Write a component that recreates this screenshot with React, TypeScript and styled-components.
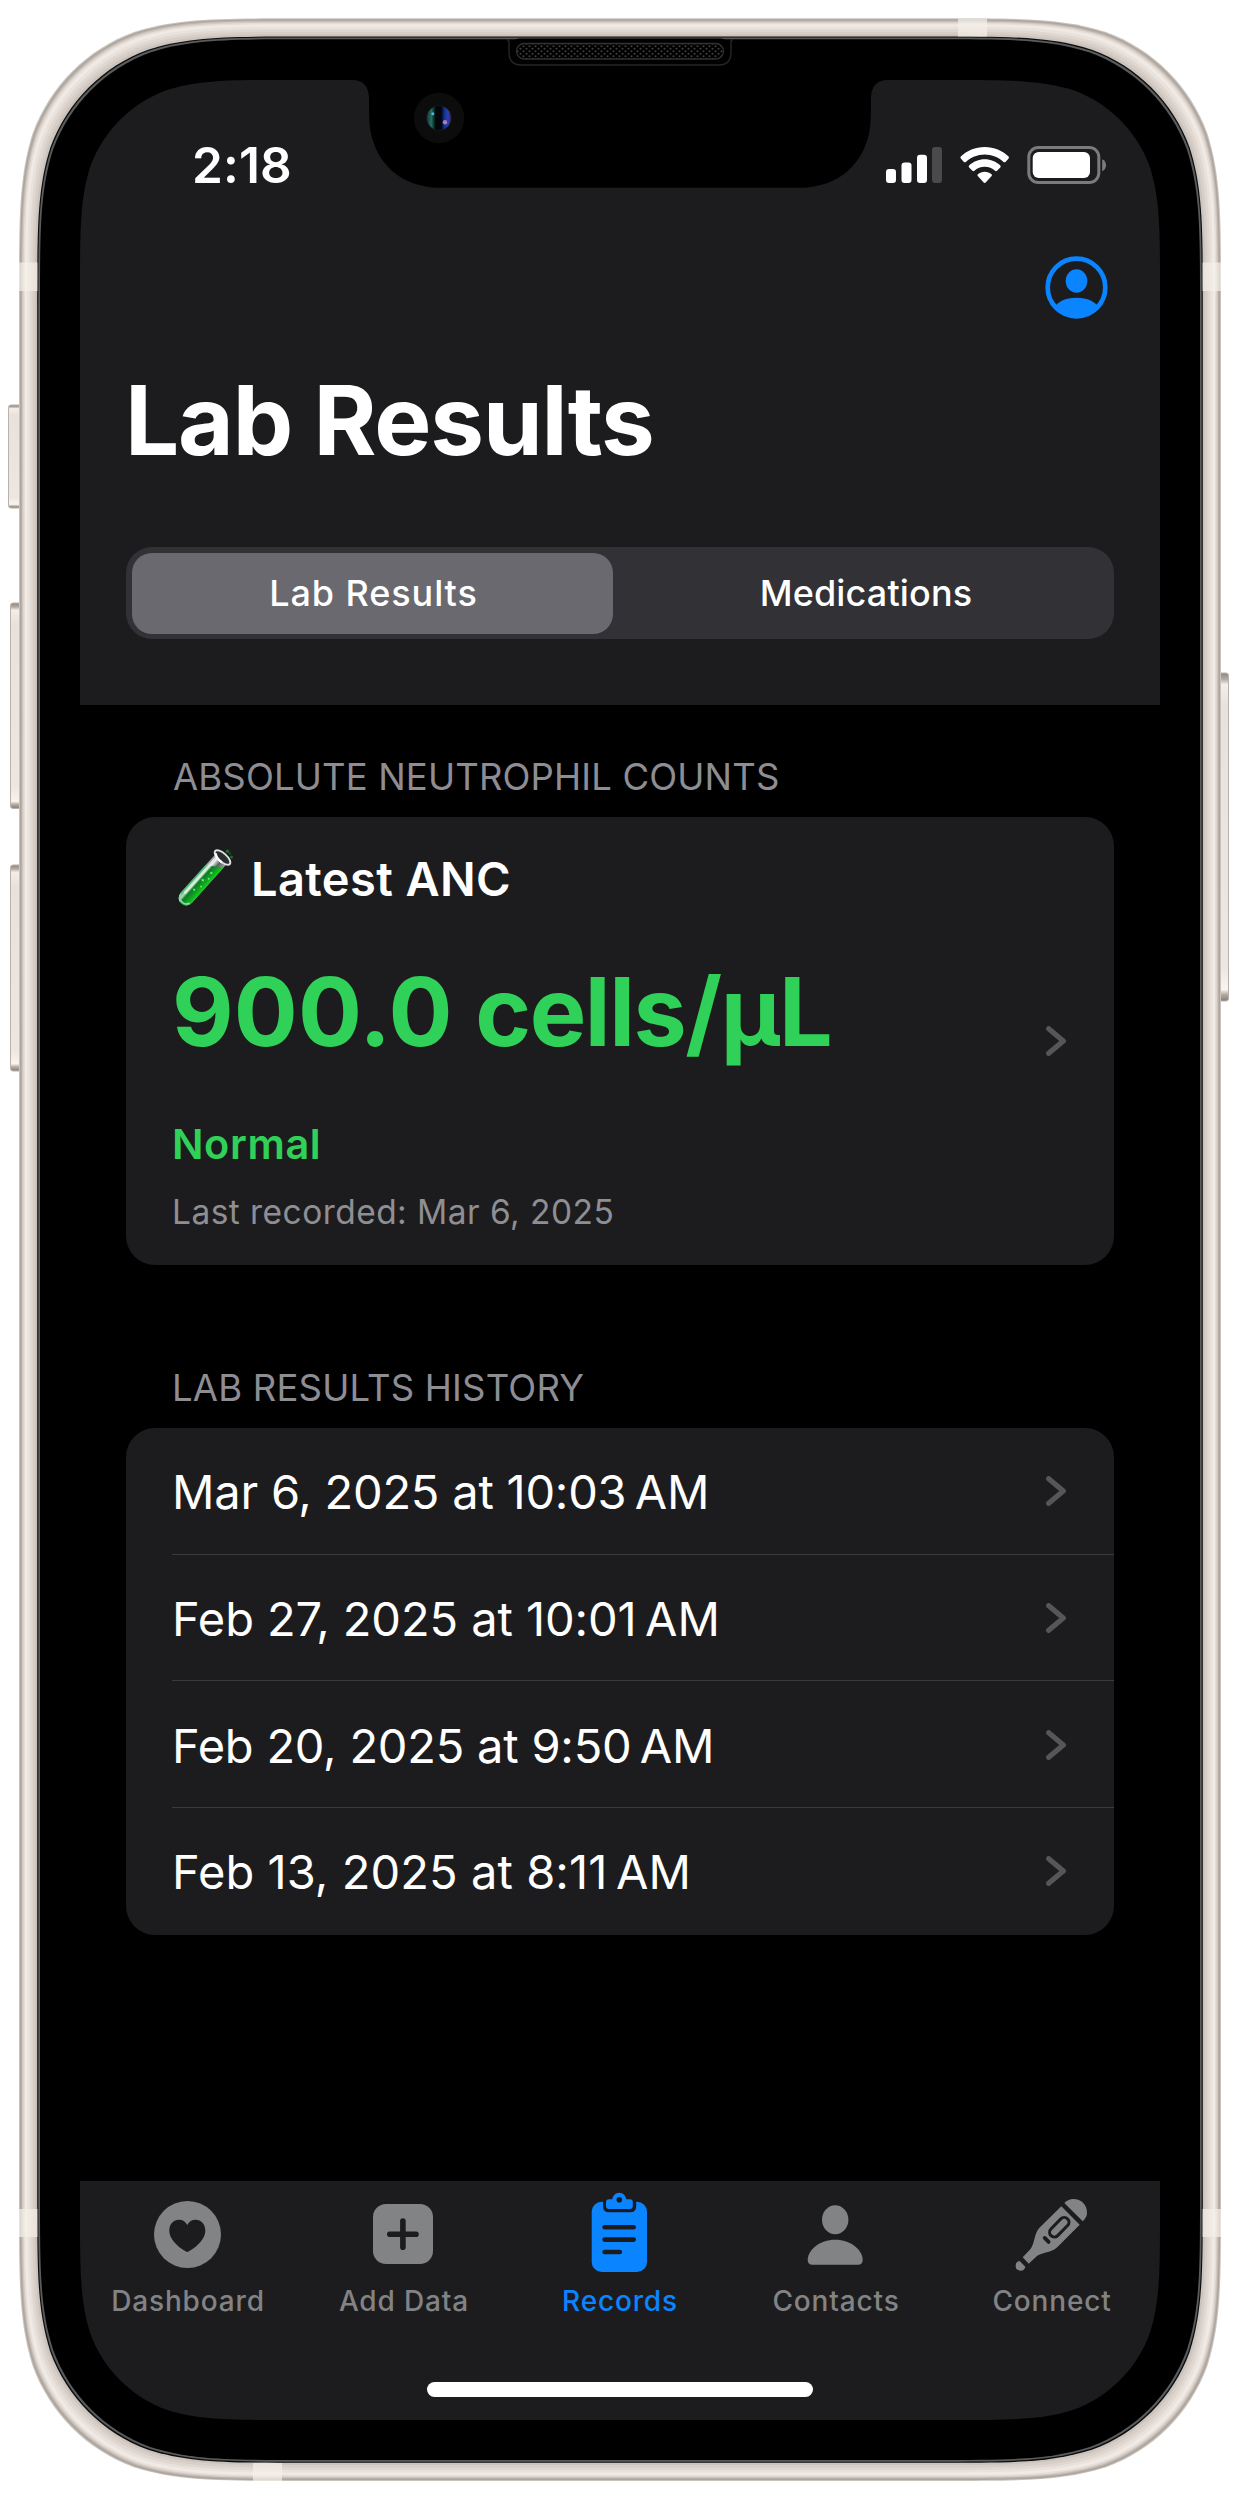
import React from "react";
import styled, { createGlobalStyle } from "styled-components";

const color = {
  surface: "#1c1c1e",
  track: "#323136",
  thumb: "#6a696f",
  blue: "#0a84ff",
  green: "#30d158",
  label: "#8d8d93",
  muted: "#8e8e93",
  tab: "#828385",
  chevron: "#565659",
  separator: "#3a3a3d",
};

/* Rounded rectangle with continuous ("squircle") corners. */
function smoothRect(x: number, y: number, w: number, h: number, r: number): string {
  const [a, b, c, d, e, f, g] = [1.52866, 1.08849, 0.86841, 0.6315, 0.07491, 0.37282, 0.16906].map((k) => k * r);
  const X = x + w;
  const Y = y + h;
  return [
    `M${x} ${y + a}`,
    `C${x} ${y + b} ${x} ${y + c} ${x + e} ${y + d}`,
    `C${x + g} ${y + f} ${x + f} ${y + g} ${x + d} ${y + e}`,
    `C${x + c} ${y} ${x + b} ${y} ${x + a} ${y}`,
    `L${X - a} ${y}`,
    `C${X - b} ${y} ${X - c} ${y} ${X - d} ${y + e}`,
    `C${X - f} ${y + g} ${X - g} ${y + f} ${X - e} ${y + d}`,
    `C${X} ${y + c} ${X} ${y + b} ${X} ${y + a}`,
    `L${X} ${Y - a}`,
    `C${X} ${Y - b} ${X} ${Y - c} ${X - e} ${Y - d}`,
    `C${X - g} ${Y - f} ${X - f} ${Y - g} ${X - d} ${Y - e}`,
    `C${X - c} ${Y} ${X - b} ${Y} ${X - a} ${Y}`,
    `L${x + a} ${Y}`,
    `C${x + b} ${Y} ${x + c} ${Y} ${x + d} ${Y - e}`,
    `C${x + f} ${Y - g} ${x + g} ${Y - f} ${x + e} ${Y - d}`,
    `C${x} ${Y - c} ${x} ${Y - b} ${x} ${Y - a}`,
    "Z",
  ].join(" ");
}

const GlobalStyle = createGlobalStyle`
  body {
    margin: 0;
    background: #fff;
  }
  * {
    box-sizing: border-box;
  }
`;

const Page = styled.div`
  position: relative;
  width: 1240px;
  height: 2500px;
  padding: 80px;
  overflow: hidden;
  font-family: Inter, "Liberation Sans", sans-serif;
  color: #fff;
`;

const FrameLayer = styled.svg`
  position: absolute;
  inset: 0;
`;

const Screen = styled.div`
  position: relative;
  width: 1080px;
  height: 2340px;
  display: flex;
  flex-direction: column;
  background: #000;
  clip-path: path("${smoothRect(0, 0, 1080, 2340, 137)}");
`;

const TopArea = styled.header`
  flex: none;
  height: 625px;
  background: ${color.surface};
  display: flex;
  flex-direction: column;
`;

const StatusBar = styled.div`
  height: 170px;
  padding: 0 53px 0 112px;
  display: flex;
  align-items: center;
  justify-content: space-between;
`;

const Clock = styled.span`
  font-size: 49.5px;
  font-weight: 600;
  line-height: 60px;
  letter-spacing: 0.15px;
`;

const NavBar = styled.div`
  height: 74px;
  padding-right: 52px;
  display: flex;
  align-items: center;
  justify-content: flex-end;
`;

const PageTitle = styled.h1`
  margin: 40px 0 0 45px;
  font-size: 96px;
  font-weight: 700;
  line-height: 112px;
  letter-spacing: -1.17px;
`;

const Segmented = styled.div`
  margin: 71px 46px 0;
  height: 92px;
  padding: 5.5px;
  border-radius: 26px;
  background: ${color.track};
  display: flex;
`;

const Segment = styled.button<{ $active?: boolean; $spacing: number }>`
  flex: ${(p) => (p.$active ? "0 0 481px" : "1")};
  border: 0;
  padding: 0 0 0 ${(p) => (p.$active ? 3 : 11)}px;
  border-radius: 20px;
  background: ${(p) => (p.$active ? color.thumb : "transparent")};
  color: #fff;
  font: 500 36px/44px Inter, "Liberation Sans", sans-serif;
  letter-spacing: ${(p) => p.$spacing}px;
`;

const Content = styled.main`
  flex: 1;
  padding: 0 46px;
`;

const Section = styled.section`
  & + & {
    margin-top: 51px;
  }
`;

const SectionTitle = styled.h2<{ $offset: number; $spacing: number }>`
  margin: 0;
  padding: 50px 0 18px ${(p) => p.$offset}px;
  font-size: 36.5px;
  font-weight: 400;
  line-height: 44px;
  letter-spacing: ${(p) => p.$spacing}px;
  color: ${color.label};
`;

const Card = styled.div`
  border-radius: 29px;
  background: ${color.surface};
  overflow: hidden;
`;

const LatestCard = styled(Card)`
  height: 448px;
  padding: 0 48px 0 46px;
  display: flex;
  align-items: center;
  justify-content: space-between;
`;

const LatestBody = styled.div`
  display: flex;
  flex-direction: column;
  padding-bottom: 2px;
`;

const LatestTitle = styled.h3`
  margin: 0;
  height: 60px;
  display: flex;
  align-items: center;
  gap: 13px;
  font-size: 47px;
  font-weight: 600;
  letter-spacing: 0.38px;
`;

const LatestValue = styled.div`
  margin-top: 48px;
  font-size: 95px;
  font-weight: 700;
  line-height: 110px;
  letter-spacing: 0.1px;
  color: ${color.green};
`;

const Unit = styled.span`
  letter-spacing: -1.4px;
`;

const LatestStatus = styled.div`
  margin-top: 52px;
  font-size: 41.5px;
  font-weight: 600;
  line-height: 50px;
  letter-spacing: 0.6px;
  color: ${color.green};
`;

const LatestDate = styled.div`
  margin-top: 23px;
  font-size: 33.5px;
  line-height: 40px;
  letter-spacing: 0.45px;
  color: ${color.muted};
`;

const HistoryRow = styled.div<{ $spacing: number }>`
  height: 126.7px;
  margin-left: 46px;
  padding-right: 48px;
  display: flex;
  align-items: center;
  justify-content: space-between;
  font-size: 47px;
  line-height: 58px;
  letter-spacing: ${(p) => p.$spacing}px;

  &:not(:last-child) {
    box-shadow: inset 0 -1px 0 ${color.separator};
  }
`;

const HistoryDate = styled.span`
  padding-top: 2px;
`;

const TabBar = styled.nav`
  flex: none;
  height: 239px;
  background: ${color.surface};
  display: flex;
  flex-direction: column;
  align-items: center;
  justify-content: space-between;
  padding: 11px 0 23px;
`;

const Tabs = styled.div`
  width: 100%;
  display: grid;
  grid-template-columns: repeat(5, 1fr);
`;

const Tab = styled.div<{ $active?: boolean }>`
  display: flex;
  flex-direction: column;
  align-items: center;
  gap: 7.5px;
  color: ${(p) => (p.$active ? color.blue : color.tab)};
`;

const TabLabel = styled.span`
  font-size: 28px;
  font-weight: 500;
  line-height: 34px;
  letter-spacing: 0.85px;
`;

const HomeIndicator = styled.div`
  width: 386px;
  height: 15px;
  border-radius: 8px;
  background: #fff;
`;

const StatusIcons = () => (
  <svg width="222" height="40" viewBox="885 145 222 40">
    <g fill="#fff">
      <rect x="886" y="169" width="10" height="14" rx="3" />
      <rect x="901.5" y="162.5" width="10" height="20.5" rx="3" />
      <rect x="917" y="154.7" width="10" height="28.3" rx="3" />
      <rect x="932" y="147" width="10" height="36" rx="3" fill="#4a4a4c" />
      <path d="M984.7 147C994 147 1002.500 150.700 1008.600 156.600Q1009.400 157.500 1008.600 158.500L1005.500 161.900Q1004.500 162.800 1003.500 161.900C998.500 157.300 992 154.500 984.700 154.500S970.900 157.300 965.900 161.900Q964.900 162.800 963.900 161.900L960.800 158.500Q960 157.500 960.800 156.600C966.900 150.700 975.400 147 984.700 147Z" />
      <path d="M984.7 159.300C990.700 159.300 996.200 161.700 1000.300 165.500Q1001.200 166.400 1000.300 167.400L997 170.700Q996 171.600 995 170.700C992.300 168.300 988.700 166.700 984.700 166.700S977.100 168.300 974.400 170.700Q973.400 171.600 972.400 170.700L969.100 167.400Q968.200 166.400 969.100 165.500C973.200 161.700 978.700 159.300 984.700 159.300Z" />
      <path d="M984.7 171.700C987.300 171.700 989.700 172.700 991.600 174.300Q992.400 175.200 991.600 176.100L985.700 182.500Q984.700 183.400 983.700 182.500L977.800 176.100Q977 175.200 977.800 174.300C979.700 172.700 982.100 171.700 984.700 171.700Z" />
      <rect x="1032.700" y="152" width="57.300" height="26" rx="6" />
    </g>
    <rect x="1028.800" y="147.500" width="70" height="35" rx="9.500" fill="none" stroke="#7b7b7d" strokeWidth="3" />
    <path d="M1102.200 159.300C1107.300 161.500 1107.300 169 1102.200 171.200Z" fill="#7b7b7d" />
  </svg>
);

const ProfileIcon = () => (
  <svg width="63" height="63" viewBox="0 0 63 63">
    <defs>
      <clipPath id="profile">
        <circle cx="31.500" cy="31.500" r="30" />
      </clipPath>
    </defs>
    <g fill={color.blue}>
      <ellipse cx="31.500" cy="25" rx="10.800" ry="11.800" />
      <path clipPath="url(#profile)" d="M8 53C12.500 45.500 20.500 41.700 31.500 41.700S50.500 45.500 55 53V63H8Z" />
    </g>
    <circle cx="31.500" cy="31.500" r="28.800" fill="none" stroke={color.blue} strokeWidth="4.700" />
  </svg>
);

const Chevron = () => (
  <svg width="20" height="30" viewBox="0 0 20 30">
    <path d="M2.700 2.700L17.300 15L2.700 27.300" fill="none" stroke={color.chevron} strokeWidth="5.200" strokeLinecap="round" strokeLinejoin="round" />
  </svg>
);

const TestTube = () => (
  <svg width="66" height="66" viewBox="2 1 66 66">
    <defs>
      <linearGradient id="glass" x1="0" x2="1">
        <stop offset="0" stopColor="#8d9391" />
        <stop offset="0.300" stopColor="#e6e9e8" />
        <stop offset="0.600" stopColor="#57605c" />
        <stop offset="1" stopColor="#9aa09e" />
      </linearGradient>
      <linearGradient id="liquid" x1="0" x2="1">
        <stop offset="0" stopColor="#3fae6a" />
        <stop offset="0.250" stopColor="#a6e5b4" />
        <stop offset="0.420" stopColor="#0f7a26" />
        <stop offset="0.750" stopColor="#11a421" />
        <stop offset="1" stopColor="#12d01c" />
      </linearGradient>
    </defs>
    <g transform="translate(52.500 12.500) rotate(42)">
      <path d="M-7.500 0H7.500V54A7.500 8 0 0 1 -7.500 54Z" fill="url(#glass)" />
      <path d="M-7.500 17L7.500 7V54A7.500 8 0 0 1 -7.500 54Z" fill="url(#liquid)" />
      <path d="M-4.300 4V51" stroke="#f0f3f1" strokeOpacity="0.700" strokeWidth="2.800" strokeLinecap="round" />
      <path d="M-6.400 55A6.500 6.700 0 0 0 6 56" fill="none" stroke="#8fd6a8" strokeWidth="1.700" />
      <ellipse cx="0" cy="0" rx="9.800" ry="4.200" fill="#2b2d2e" stroke="#dfe2e1" strokeWidth="1.900" />
      <path d="M-8 1.500Q-3 5 3 4" fill="none" stroke="#fff" strokeWidth="2.200" />
      <g fill="#5ff06a">
        <circle cx="2" cy="19" r="1.200" />
        <circle cx="4" cy="25" r="1" />
        <circle cx="0.500" cy="30" r="1.300" />
        <circle cx="3.500" cy="36" r="1" />
        <circle cx="0.500" cy="43" r="1.100" />
      </g>
    </g>
    <circle cx="57.500" cy="6.300" r="1.700" fill="#1e6a33" />
    <circle cx="61.500" cy="12" r="1.500" fill="#1e6a33" />
    <circle cx="60" cy="8.500" r="0.900" fill="#1e6a33" />
  </svg>
);

const TabGlyph = styled.svg.attrs({ width: 80, height: 84, viewBox: "0 0 80 84" })`
  display: block;
  fill: currentColor;
`;

const Cut = styled.path`
  fill: none;
  stroke: ${color.surface};
  stroke-linecap: round;
`;

const DashboardIcon = () => (
  <TabGlyph>
    <circle cx="39.500" cy="42.500" r="33.500" />
    <path
      fill={color.surface}
      d="M39.300 60C36 58.700 21.300 50 21.300 38.500C21.300 32 25.500 27.700 31 27.700C34.500 27.700 37.500 29.500 39.300 33C41 29.500 44 27.700 47.600 27.700C53 27.700 57.300 32 57.300 38.500C57.300 50 42.600 58.700 39.300 60Z"
    />
  </TabGlyph>
);

const AddDataIcon = () => (
  <TabGlyph>
    <rect x="9" y="12" width="60" height="60" rx="13" />
    <Cut d="M25.800 42.200H52M38.900 29V55.300" strokeWidth="5.600" />
  </TabGlyph>
);

const RecordsIcon = () => (
  <TabGlyph>
    <rect x="11.700" y="9.700" width="55.300" height="70.300" rx="10" />
    <path fill={color.surface} d="M23 8H56.200V14.300Q56.200 20.300 50.200 20.300H29Q23 20.300 23 14.300Z" />
    <path d="M29 7.300H32.300C33 3.500 35.500 0.700 39.300 0.700S45.600 3.500 46.300 7.300H49.800Q52.800 7.300 52.800 10.300V14Q52.800 17 49.800 17H29Q26 17 26 14V10.300Q26 7.300 29 7.300Z" />
    <circle cx="39.300" cy="7.800" r="2.800" fill={color.surface} />
    <Cut d="M24.600 35.300H53.700M24.600 47.600H53.700M24.600 60H39.800" strokeWidth="4.600" />
  </TabGlyph>
);

const ContactsIcon = () => (
  <TabGlyph>
    <ellipse cx="39.200" cy="27.700" rx="13.200" ry="14.500" />
    <path d="M39.200 47.700C55 47.700 66.700 58 66.700 68C66.700 71 65 72.700 62 72.700H16.400C13.400 72.700 11.700 71 11.700 68C11.700 58 23.400 47.700 39.200 47.700Z" />
  </TabGlyph>
);

const ConnectIcon = () => (
  <TabGlyph>
    <path d="M52.300 11C55 8.300 58 7 61.300 7C69.500 7 75 13 75 20.700C75 24 73.500 26.700 70.700 29.300Z" />
    <path d="M49.300 14.300L67.700 32.700L46 54.500C43.500 57 40.500 58.700 37 59.700C31 61.300 28 61.800 25 64L16.700 71.700L10.700 65.300L18.300 57.300C20.500 54.500 21.300 51.300 22.700 46C24 41 25.300 38 28 35.300Z" />
    <path d="M7.700 69L13.300 74.800A4.900 4.900 0 1 1 7.700 69Z" />
    <Cut d="M42.300 40.300L52.200 30.200" strokeWidth="12.500" />
    <path d="M42.300 40.300L52.200 30.200" stroke="currentColor" strokeWidth="6.400" strokeLinecap="round" />
    <Cut d="M32.700 45.900L36.600 49.900" strokeWidth="3.800" />
  </TabGlyph>
);

/* Body of the phone from its outer edge inwards: inset and colour of each ring. */
const rings: [number, string][] = [
  [0, "#c9c3bd"],
  [1, "#aca49d"],
  [2.2, "#bbb3ac"],
  [3.2, "#d2cac3"],
  [4.5, "#e5ddd7"],
  [6, "#f1eae4"],
  [8.5, "#e9e1db"],
  [11, "#dfd7d0"],
  [13.5, "#d6cec7"],
  [16, "#cbc3bd"],
  [18.2, "#0c0c0c"],
  [19.3, "#5a5b5c"],
  [21, "#000000"],
];

const bands = [
  { x: 19, y: 262.500, w: 18.500, h: 28.500 },
  { x: 1202.500, y: 262.500, w: 18.500, h: 28.500 },
  { x: 19, y: 2209, w: 18.500, h: 28 },
  { x: 1202.500, y: 2209, w: 18.500, h: 28 },
  { x: 958, y: 18.500, w: 29, h: 18 },
  { x: 253, y: 2463, w: 29, h: 18 },
];

const sideButtons = [
  { x: 8, y: 405, w: 16, h: 103 },
  { x: 10, y: 603, w: 14, h: 205.500 },
  { x: 10, y: 865, w: 14, h: 206 },
  { x: 1216, y: 673, w: 13, h: 328 },
];

const DeviceFrame = () => (
  <FrameLayer width="1240" height="2500" viewBox="0 0 1240 2500">
    <defs>
      <linearGradient id="button" x1="0" y1="0" x2="0" y2="1">
        <stop offset="0" stopColor="#8f867e" />
        <stop offset="0.020" stopColor="#b5ada5" />
        <stop offset="0.035" stopColor="#f5eee8" />
        <stop offset="0.100" stopColor="#e9e2dc" />
        <stop offset="0.900" stopColor="#eee7e1" />
        <stop offset="0.965" stopColor="#faf4ee" />
        <stop offset="0.980" stopColor="#b5ada5" />
        <stop offset="1" stopColor="#857c74" />
      </linearGradient>
    </defs>
    {sideButtons.map((b) => (
      <rect key={b.y} x={b.x + 0.5} y={b.y} width={b.w - 1} height={b.h} rx="2.500" fill="url(#button)" stroke="#b9b1aa" strokeWidth="1" />
    ))}
    {rings.map(([inset, fill]) => (
      <path key={inset} d={smoothRect(19 + inset, 18.3 + inset, 1202 - 2 * inset, 2462.700 - 2 * inset, 182 - inset * 0.35)} fill={fill} />
    ))}
    {bands.map((b) => (
      <rect key={`${b.x}-${b.y}`} x={b.x} y={b.y} width={b.w} height={b.h} fill="#f3efe8" fillOpacity="0.700" />
    ))}
  </FrameLayer>
);

const NotchLayer = styled.svg`
  position: absolute;
  left: 340px;
  top: 36px;
`;

const Notch = () => (
  <NotchLayer width="560" height="160" viewBox="340 36 560 160">
    <defs>
      <pattern id="mesh" width="6" height="5" patternUnits="userSpaceOnUse">
        <circle cx="1.500" cy="1.250" r="1.100" fill="#3d3d3d" />
        <circle cx="4.500" cy="3.750" r="1.100" fill="#3d3d3d" />
      </pattern>
      <linearGradient id="lens" x1="0" x2="1">
        <stop offset="0" stopColor="#23323a" />
        <stop offset="0.180" stopColor="#1d7364" />
        <stop offset="0.360" stopColor="#020606" />
        <stop offset="0.600" stopColor="#030511" />
        <stop offset="0.720" stopColor="#12328c" />
        <stop offset="0.880" stopColor="#2f3fb0" />
        <stop offset="1" stopColor="#2a2450" />
      </linearGradient>
    </defs>
    <path d="M346 79H894V80H888C876 80 871 87 871 99C871 112 871 122 869.500 131C864 162 840 187.700 800 187.700H440C400 187.700 376 162 370.500 131C369 122 369 112 369 99C369 87 364 80 352 80H346Z" fill="#000" />
    <path d="M507 39.500Q509 39.500 509 43V52Q509 65 521 65H719Q731 65 731 52V43Q731 39.500 733 39.500" fill="none" stroke="#262626" strokeWidth="1.400" />
    <rect x="511.500" y="38.500" width="217" height="24" rx="8" fill="#000" />
    <rect x="516.500" y="43.500" width="207" height="15.500" rx="7.700" fill="url(#mesh)" stroke="#303030" strokeWidth="1.300" />
    <circle cx="439" cy="118" r="25.200" fill="#0c0c0d" />
    <circle cx="439" cy="118" r="13" fill="#16161a" />
    <circle cx="439" cy="118" r="12" fill="url(#lens)" />
    <circle cx="432.800" cy="113.700" r="1.500" fill="#4fb7e0" />
    <circle cx="445" cy="122.300" r="2.200" fill="#a67dba" />
  </NotchLayer>
);

const history = [
  { date: "Mar 6, 2025 at 10:03\u202fAM", spacing: -0.22 },
  { date: "Feb 27, 2025 at 10:01\u202fAM", spacing: -0.08 },
  { date: "Feb 20, 2025 at 9:50\u202fAM", spacing: -0.22 },
  { date: "Feb 13, 2025 at 8:11\u202fAM", spacing: 0.08 },
];

const tabs = [
  { label: "Dashboard", Icon: DashboardIcon },
  { label: "Add Data", Icon: AddDataIcon },
  { label: "Records", Icon: RecordsIcon, active: true },
  { label: "Contacts", Icon: ContactsIcon },
  { label: "Connect", Icon: ConnectIcon },
];

export default function App() {
  return (
    <Page>
      <GlobalStyle />
      <DeviceFrame />
      <Screen>
        <TopArea>
          <StatusBar>
            <Clock>2:18</Clock>
            <StatusIcons />
          </StatusBar>
          <NavBar>
            <ProfileIcon />
          </NavBar>
          <PageTitle>Lab Results</PageTitle>
          <Segmented>
            <Segment $active $spacing={0.9}>
              Lab Results
            </Segment>
            <Segment $spacing={0.15}>Medications</Segment>
          </Segmented>
        </TopArea>
        <Content>
          <Section>
            <SectionTitle $offset={47} $spacing={0.14}>
              ABSOLUTE NEUTROPHIL COUNTS
            </SectionTitle>
            <LatestCard>
              <LatestBody>
                <LatestTitle>
                  <TestTube />
                  Latest ANC
                </LatestTitle>
                <LatestValue>
                  900.0 <Unit>cells/µL</Unit>
                </LatestValue>
                <LatestStatus>Normal</LatestStatus>
                <LatestDate>Last recorded: Mar 6, 2025</LatestDate>
              </LatestBody>
              <Chevron />
            </LatestCard>
          </Section>
          <Section>
            <SectionTitle $offset={46} $spacing={0.2}>
              LAB RESULTS HISTORY
            </SectionTitle>
            <Card>
              {history.map((row) => (
                <HistoryRow key={row.date} $spacing={row.spacing}>
                  <HistoryDate>{row.date}</HistoryDate>
                  <Chevron />
                </HistoryRow>
              ))}
            </Card>
          </Section>
        </Content>
        <TabBar>
          <Tabs>
            {tabs.map(({ label, Icon, active }) => (
              <Tab key={label} $active={active}>
                <Icon />
                <TabLabel>{label}</TabLabel>
              </Tab>
            ))}
          </Tabs>
          <HomeIndicator />
        </TabBar>
      </Screen>
      <Notch />
    </Page>
  );
}
